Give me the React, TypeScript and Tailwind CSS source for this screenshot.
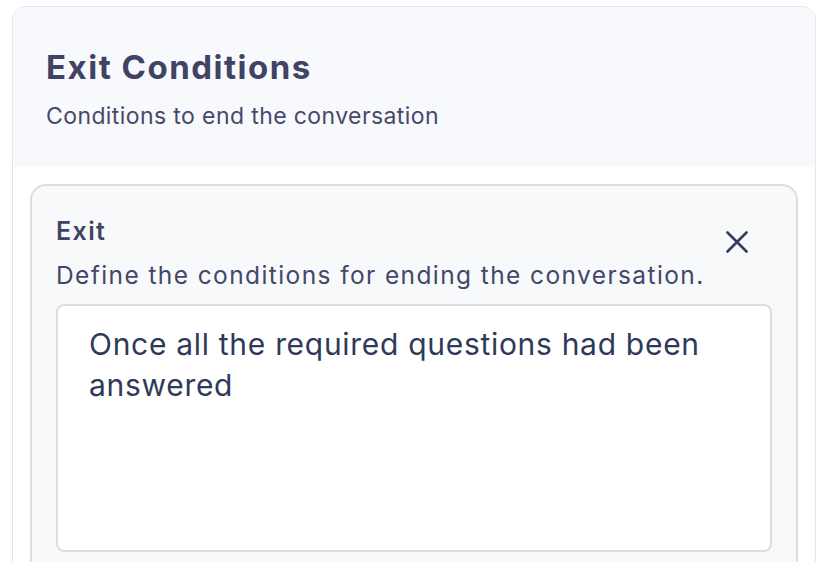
export default function App() {
  return (
    <div className="min-h-screen bg-white font-['Inter',sans-serif] text-[#3f4263]">
      <div className="ml-[12px] mt-[6px] w-[804px] h-[600px] rounded-[14px] border border-[#e4e5ea] overflow-hidden">
        <div className="bg-[#f8f9fc] h-[160px] px-[33px] pt-[40px]">
          <h1 className="text-[33px] leading-[40px] font-bold tracking-[1.5px] text-[#414365]">Exit Conditions</h1>
          <p className="mt-[16px] text-[23px] leading-[26px] tracking-[0.4px] text-[#46496a]">Conditions to end the conversation</p>
        </div>
        <div className="p-[17px]">
          <div className="rounded-[16px] border-2 border-[#dcdde1] bg-[#f8f9fb] px-[24px] pt-[30px] h-[420px]">
            <div className="flex items-start justify-between">
              <div>
                <h2 className="text-[25px] leading-[30px] font-semibold tracking-[1.4px] text-[#414365]">Exit</h2>
                <p className="mt-[14px] text-[24.5px] leading-[30px] tracking-[1.4px] text-[#43476a]">Define the conditions for ending the conversation.</p>
              </div>
              <button className="mt-[15px] mr-[24px] text-[#363d5c]">
                <svg width="22" height="22" viewBox="0 0 22 22" fill="none" stroke="currentColor" strokeWidth="2.6" strokeLinecap="round">
                  <path d="M1.5 1.5l19 19M20.5 1.5l-19 19" />
                </svg>
              </button>
            </div>
            <div className="mt-[14px] h-[248px] rounded-[8px] border-2 border-[#dcdde1] bg-white pl-[31px] pr-[20px] pt-[18px]">
              <p className="text-[30px] leading-[41px] tracking-[0.7px] text-[#2f3a5a]">Once all the required questions had been answered</p>
            </div>
          </div>
        </div>
      </div>
    </div>
  )
}
